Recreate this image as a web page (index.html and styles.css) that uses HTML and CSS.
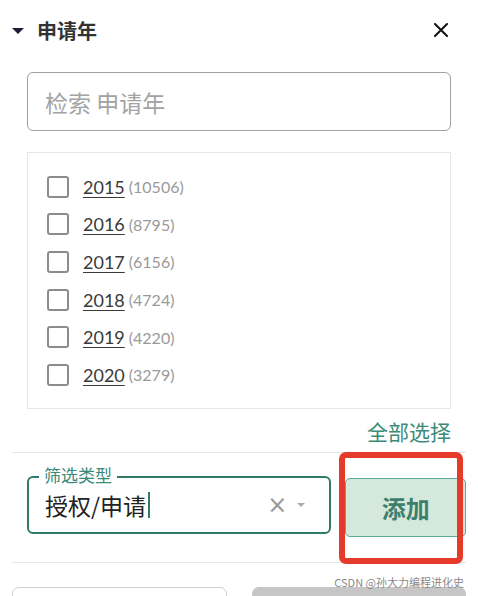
FILE: index.html
```html
<!DOCTYPE html>
<html lang="zh">
<head>
    <meta charset="UTF-8">
    <meta name="viewport" content="width=device-width, initial-scale=1.0">
    <title>申请年</title>
    <link rel="stylesheet" href="styles.css">
</head>
<body>
    <div class="panel">
        <header class="head">
            <span class="caret"></span>
            <h2 class="title">申请年</h2>
            <svg class="close" width="14" height="14" viewBox="0 0 14 14">
                <path d="M1 1L13 13M13 1L1 13" stroke="#111" stroke-width="2" stroke-linecap="round"/>
            </svg>
        </header>

        <div class="search">
            <input type="text" placeholder="检索 申请年">
        </div>

        <div class="years">
            <label class="year"><span class="box"></span><a href="#">2015</a><span class="count">(10506)</span></label>
            <label class="year"><span class="box"></span><a href="#">2016</a><span class="count">(8795)</span></label>
            <label class="year"><span class="box"></span><a href="#">2017</a><span class="count">(6156)</span></label>
            <label class="year"><span class="box"></span><a href="#">2018</a><span class="count">(4724)</span></label>
            <label class="year"><span class="box"></span><a href="#">2019</a><span class="count">(4220)</span></label>
            <label class="year"><span class="box"></span><a href="#">2020</a><span class="count">(3279)</span></label>
        </div>

        <div class="select-all">全部选择</div>

        <div class="filter-row">
            <div class="field">
                <span class="field-label">筛选类型</span>
                <span class="field-value">授权/申请<span class="cursor"></span></span>
                <span class="clear">&#215;</span>
                <span class="arrow"></span>
            </div>
            <button class="add">添加</button>
        </div>

        <div class="bottom">
            <button class="btn-white"></button>
            <button class="btn-gray"></button>
        </div>
    </div>

    <!-- пометка поверх скриншота -->
    <div class="mark"></div>
    <div class="watermark">CSDN @孙大力编程进化史</div>
</body>
</html>
```

FILE: styles.css
```css
* {
    margin: 0;
    padding: 0;
    box-sizing: border-box;
    font-family: Lato, "Noto Sans CJK SC", sans-serif;
}
body {
    background: #fff;
    color: #333;
    width: 478px;
    height: 596px;
    overflow: hidden;
    position: relative;
}
.panel {
    padding: 0 12px;
}
.head {
    display: flex;
    align-items: center;
    height: 60px;
}
.caret {
    width: 0;
    height: 0;
    border-left: 6px solid transparent;
    border-right: 6px solid transparent;
    border-top: 6px solid #1b1d3a;
    margin-right: 13px;
    margin-top: 1px;
}
.title {
    font-family: "Noto Sans CJK SC", sans-serif;
    font-size: 20px;
    font-weight: 700;
    color: #333;
    flex: 1;
}
.close {
    margin-right: 18px;
}
.search {
    padding: 12px 15px 0;
}
.search input {
    width: 100%;
    height: 59px;
    border: 1px solid #a0a0a0;
    border-radius: 6px;
    padding: 0 17px;
    font-family: "Noto Sans CJK SC", sans-serif;
    font-size: 23px;
    color: #333;
    outline: none;
}
.search input::placeholder {
    color: #a3a3a3;
}
.years {
    margin: 21px 15px 0;
    height: 257px;
    border: 1px solid #e6e6e6;
    padding: 15px 19px 0;
}
.year {
    display: flex;
    align-items: center;
    height: 37.6px;
}
.box {
    width: 22px;
    height: 22px;
    border: 2px solid #8c8c8c;
    border-radius: 3px;
    margin-right: 14px;
}
.year a {
    font-size: 18px;
    color: #3a3a3a;
    text-decoration: underline;
    text-underline-offset: 3px;
}
.count {
    font-size: 16px;
    color: #9a9a9a;
    margin-left: 4px;
}
.select-all {
    height: 44px;
    display: flex;
    align-items: center;
    justify-content: flex-end;
    padding-right: 15px;
    font-family: "Noto Sans CJK SC", sans-serif;
    font-size: 21px;
    color: #3b8a78;
    border-bottom: 1px solid #e6e6e6;
}
.filter-row {
    display: flex;
    align-items: flex-start;
    gap: 14px;
    padding: 23px 0 0 15px;
    height: 110px;
    border-bottom: 1px solid #e6e6e6;
}
.field {
    position: relative;
    width: 305px;
    height: 58px;
    border: 2px solid #2f7a69;
    border-radius: 6px;
    display: flex;
    align-items: center;
    padding: 0 0 0 16px;
}
.field-label {
    position: absolute;
    top: -15px;
    left: 10px;
    padding: 0 5px;
    background: #fff;
    font-family: "Noto Sans CJK SC", sans-serif;
    font-size: 17px;
    line-height: 24px;
    color: #3b8a78;
}
.field-value {
    flex: 1;
    font-family: "Noto Sans CJK SC", sans-serif;
    font-size: 23px;
    color: #222;
    display: flex;
    align-items: center;
}
.cursor {
    width: 2px;
    height: 26px;
    background: #2f7a69;
    margin-left: 2px;
}
.clear {
    font-family: "DejaVu Sans", sans-serif;
    font-size: 24px;
    color: #999;
    margin-right: 10px;
}
.arrow {
    width: 0;
    height: 0;
    border-left: 4px solid transparent;
    border-right: 4px solid transparent;
    border-top: 4px solid #aaa;
    margin-right: 24px;
}
.add {
    width: 121px;
    height: 59px;
    margin-top: 2px;
    background: #d5e8dc;
    border: 1px solid #5aab97;
    border-radius: 5px;
    font-family: "Noto Sans CJK SC", sans-serif;
    font-size: 24px;
    font-weight: 700;
    color: #3d7f6c;
}
.bottom {
    display: flex;
    gap: 25px;
    padding-top: 24px;
}
.btn-white {
    width: 215px;
    height: 44px;
    background: #fff;
    border: 1px solid #cfcfcf;
    border-radius: 7px;
}
.btn-gray {
    width: 214px;
    height: 44px;
    background: #c6c6c6;
    border: none;
    border-radius: 7px;
}
.mark {
    position: absolute;
    left: 339px;
    top: 452px;
    width: 124px;
    height: 112px;
    border: 6px solid #e63b2a;
    border-radius: 7px;
}
.watermark {
    position: absolute;
    right: 14px;
    top: 574px;
    font-family: "Noto Sans CJK SC", sans-serif;
    font-size: 11px;
    color: #8a8a8a;
}
```
